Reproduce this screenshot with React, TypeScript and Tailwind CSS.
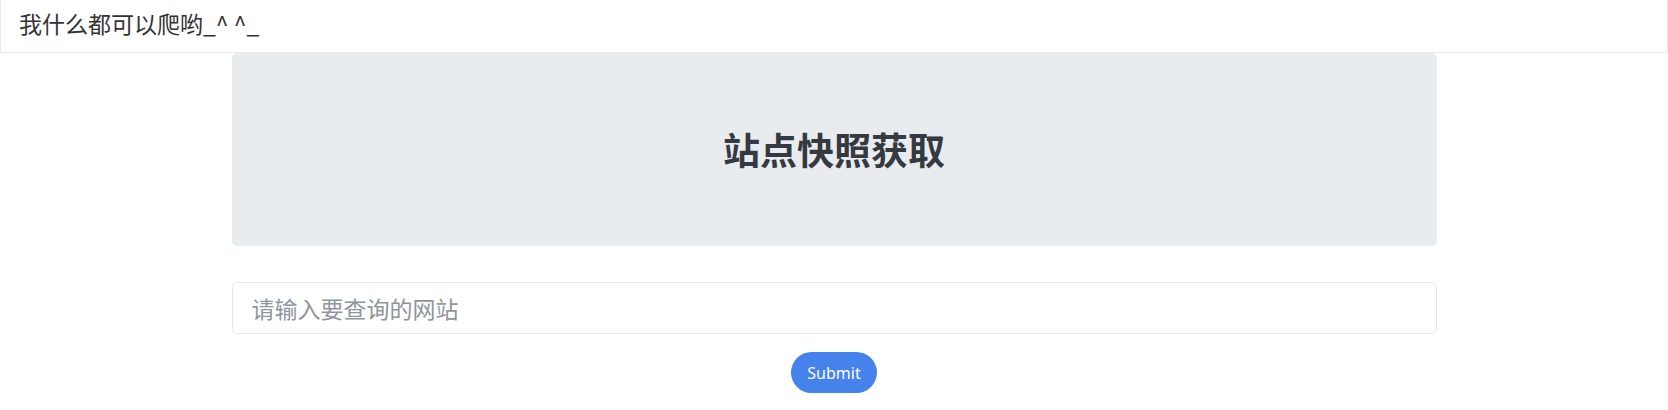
import React from "react";

export default function App() {
  const cjk = { fontFamily: '"Noto Sans CJK SC", "Noto Sans", sans-serif' };
  return (
    <div className="w-[1668px] h-[410px] bg-white overflow-hidden" style={cjk}>
      <header className="h-[53px] border-l border-r border-b border-[#e9e9e9] flex items-center pl-[18px] pb-[6px]">
        <span className="text-[23px] leading-none text-[#333333] font-[400] [font-family:'Noto_Sans_CJK_SC',sans-serif]">我什么都可以爬哟_^ ^_</span>
      </header>
      <main className="w-[1205px] mx-auto flex flex-col">
        <div className="h-[193px] bg-[#e9ecef] rounded-[5px] flex items-center justify-center">
          <h1 className="text-[37px] leading-none font-bold text-[#343a40]">站点快照获取</h1>
        </div>
        <input
          type="text"
          placeholder="请输入要查询的网站"
          className="mt-[36px] h-[52px] w-full border border-[#e6e6e6] rounded-[5px] px-[19px] text-[23px] text-[#495057] placeholder:text-[#8e959c] outline-none"
        />
        <div className="flex justify-center mt-[18px]">
          <button className="w-[86px] h-[41px] rounded-full bg-[#4582ec] text-white text-[16px] [font-family:'Noto_Sans',sans-serif]">
            Submit
          </button>
        </div>
      </main>
    </div>
  );
}
